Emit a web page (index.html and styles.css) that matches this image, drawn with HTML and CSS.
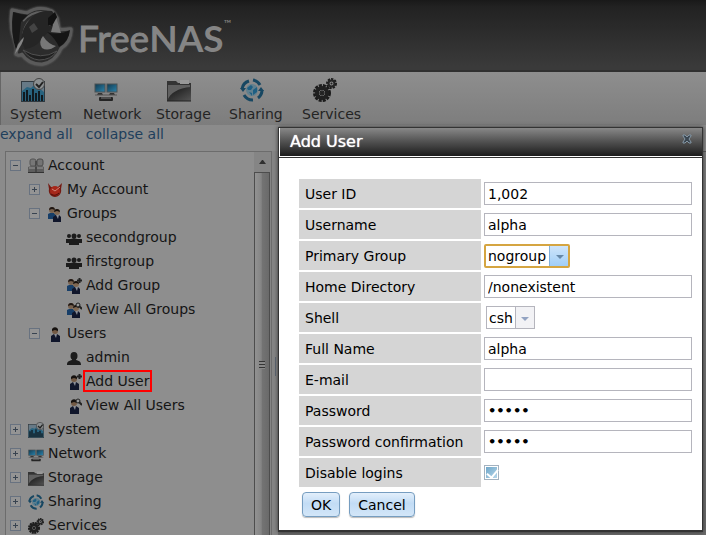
FILE: index.html
```
<!DOCTYPE html>
<html lang="en">
<head>
    <meta charset="utf-8">
    <title>FreeNAS</title>
    <link rel="stylesheet" href="styles.css">
</head>
<body>

    <!-- icons shared by the toolbar and the tree -->
    <svg class="sprite" aria-hidden="true">
        <defs>
            <linearGradient id="screen" x1="0" y1="0" x2="1" y2="1">
                <stop offset="0" stop-color="#123a50"/>
                <stop offset="1" stop-color="#2b83ab"/>
            </linearGradient>
            <linearGradient id="folder" x1="0" y1="0" x2="1" y2="1">
                <stop offset="0" stop-color="#111"/>
                <stop offset="1" stop-color="#555"/>
            </linearGradient>
        </defs>
        <symbol id="system" viewBox="0 0 24 24">
            <rect x="0.5" y="3.5" width="23" height="20" fill="#667986" stroke="#303940"/>
            <path d="M1 13l5-4 4 1 5-5 4 6 4 3v9H1z" fill="#28637f"/>
            <path d="M3 23v-9M6 23V12M9 23v-6M12 23V11M15 23v-8M18 23V13M21 23v-6" stroke="#111a20" stroke-width="2"/>
            <circle cx="18" cy="6" r="5.500" fill="#8b8f91" stroke="#444"/>
            <path d="M15 6l3 3 4-5" fill="none" stroke="#222" stroke-width="2"/>
        </symbol>
        <symbol id="network" viewBox="0 0 24 24">
            <rect x="1" y="6" width="10" height="8" fill="url(#screen)" stroke="#4b5254"/>
            <rect x="13" y="6" width="10" height="8" fill="url(#screen)" stroke="#4b5254"/>
            <path d="M4 15h4l1 2H3zM16 15h4l1 2h-6z" fill="#333"/>
            <path d="M1 17h22" stroke="#555"/>
            <rect x="5" y="19" width="14" height="4" rx="1" fill="#242424"/>
            <path d="M7 20h10" stroke="#777"/>
        </symbol>
        <symbol id="storage" viewBox="0 0 24 24">
            <path d="M0 3h9l2 2h13v18H0z" fill="#343434"/>
            <path d="M13 2h9v4h-9z" fill="#999"/>
            <path d="M1 7h22v15H1z" fill="#606060"/>
            <path d="M0 23C3 15 11 10 24 9v14z" fill="url(#folder)"/>
            <path d="M0 23h24" stroke="#222"/>
        </symbol>
        <symbol id="sharing" viewBox="0 0 24 24">
            <path d="M9 3A10 10 0 0 0 2 11M4 17a10 10 0 0 0 9 5M18 20a10 10 0 0 0 4-8M20 7a10 10 0 0 0-7-5" fill="none" stroke="#174762" stroke-width="3"/>
            <path d="M0 10h6l-3 4zM18 13h6l-3-4z" fill="#174762"/>
            <circle cx="12" cy="12" r="6" fill="#5f7f8e"/>
            <path d="M7 10l4-3 2 2-2 3H8zM13 12l4-3v5l-4 3zM9 14l3 1v3z" fill="#1e5f83"/>
        </symbol>
        <symbol id="services" viewBox="0 0 24 24">
            <circle cx="9" cy="15" r="7.500" fill="none" stroke="#1b1b1b" stroke-width="3" stroke-dasharray="3 1"/>
            <circle cx="9" cy="15" r="5" fill="none" stroke="#202020" stroke-width="4"/>
            <path d="M9 9v12M3 15h12M5 11l8 8M13 11l-8 8" stroke="#202020"/>
            <circle cx="9" cy="15" r="2" fill="#222"/>
            <circle cx="18.500" cy="5.500" r="4" fill="none" stroke="#1b1b1b" stroke-width="3" stroke-dasharray="2 1"/>
            <circle cx="18.500" cy="5.500" r="3" fill="none" stroke="#242424" stroke-width="2"/>
            <circle cx="18.500" cy="5.500" r="1" fill="#222"/>
        </symbol>
        <symbol id="account" viewBox="0 0 16 16">
            <rect x="2" y="1" width="6" height="7" rx="2" fill="#777" stroke="#555"/>
            <rect x="9" y="1" width="6" height="7" rx="2" fill="#747474" stroke="#4a4a4a"/>
            <path d="M0 15V9l3-1h4l1 1 2-1h4l2 1v6z" fill="#5d5d5d"/>
            <path d="M1 10h6M9 10h6" stroke="#999"/>
            <path d="M0 14.500h16M8 3v11" stroke="#333"/>
        </symbol>
        <symbol id="daemon" viewBox="0 0 16 16">
            <path d="M1 1l3 4h7l4-4-1 6c1 4-2 8-6 8s-7-4-6-8z" fill="#741a12"/>
            <circle cx="8" cy="9" r="5" fill="#a6281b"/>
            <path d="M5 7l3 2 5-4" fill="none" stroke="#d08478"/>
            <path d="M4 12q4 3 8-1" fill="none" stroke="#4d0d08"/>
        </symbol>
        <symbol id="user" viewBox="0 0 16 16">
            <circle cx="8" cy="5" r="3" fill="#735a45"/>
            <path d="M5 5c-1-5 7-5 6 0L8 4z" fill="#15110f"/>
            <path d="M4 16v-6l3-2h3l3 2v6z" fill="#10162b"/>
            <path d="M7 8h3l-1 4z" fill="#8b8f96"/>
        </symbol>
        <symbol id="users" viewBox="0 0 16 16">
            <circle cx="5" cy="4" r="3" fill="#77614e"/>
            <path d="M2 4c0-4 6-4 6 0L5 3z" fill="#1d1512"/>
            <path d="M1 13V8l2-1h4l2 2v4z" fill="#173e68"/>
            <circle cx="10" cy="6" r="3" fill="#806852"/>
            <path d="M7 6c0-4 6-4 6 0l-3-1z" fill="#16110f"/>
            <path d="M6 16v-5l3-2h3l2 2v5z" fill="#10162b"/>
            <path d="M9 9h3l-1 4z" fill="#8b8f96"/>
        </symbol>
        <symbol id="group" viewBox="0 0 16 16">
            <circle cx="3" cy="6" r="2" fill="#1c1c1c"/>
            <circle cx="13" cy="6" r="2" fill="#1c1c1c"/>
            <circle cx="8" cy="6" r="2.500" fill="#1c1c1c"/>
            <path d="M0 13V9h5l3-1 3 1h5v4h-3v2H3v-2z" fill="#1c1c1c"/>
        </symbol>
        <symbol id="person" viewBox="0 0 16 16">
            <ellipse cx="8" cy="6" rx="3.500" ry="4" fill="#1c1c1c"/>
            <path d="M1 15c0-4 2-4 5-5V7h4v3c3 1 5 1 5 5z" fill="#1c1c1c"/>
        </symbol>
        <symbol id="plus" viewBox="0 0 16 16">
            <path d="M13.500 0v5M11 2.500h5" stroke="#222" stroke-width="2"/>
        </symbol>
        <symbol id="lens" viewBox="0 0 16 16">
            <circle cx="12" cy="3" r="2" fill="#999" stroke="#222"/>
            <path d="M13 4l3 3" stroke="#222" stroke-width="2"/>
        </symbol>
    </svg>

    <header class="banner">
        <svg class="logo" viewBox="0 0 64 60" aria-hidden="true">
            <path d="M3 4q8 2 15 3Q30-1 43 5l5 7 2 12 12-1q0 13-10 19-6 14-19 16-14 0-20-10-3 2-6 0l2-8Q0 25 3 4z" fill="#2c2c2c" stroke="#5a5a5a" stroke-width="3" stroke-linejoin="round"/>
            <path d="M14 15Q26 2 42 8M14 28q3-14 13-17" fill="none" stroke="#606060" stroke-width="2"/>
            <path d="M4 6q9 3 15 3l-7 7-2 18-3 10Q1 26 4 6z" fill="#181818"/>
            <path d="M22 12q9-9 21-7l5 7-9 1 1 6 5 1q-8 8-13 14-6 8-16 9-9-14 6-31z" fill="#252525"/>
            <path d="M20 21l5-4 4 6-6 4z" fill="#444"/>
            <path d="M47 11l-7 9 4-1-2 7 10 1z" fill="#777"/>
            <path d="M39 12l7-6 2 5-5 9-4-1z" fill="#111"/>
            <path d="M34 30q-5 6-1 12 6 4 14-2-8-2-13-10z" fill="#777"/>
            <path d="M38 26q12 4 23-2-1 11-11 17-3-8-12-15z" fill="#151515"/>
            <path d="M15 31q-1 7-9 17Q8 37 15 31z" fill="#858585"/>
            <path d="M14 44q6 9 16 10 12 0 18-9-16 10-34-1z" fill="#202020" stroke="#505050"/>
        </svg>
        <span class="wordmark">Free<b>NAS</b></span><span class="tm">™</span>
    </header>

    <nav class="toolbar">
        <a href="#"><svg><use href="#system"/></svg>System</a>
        <a href="#"><svg><use href="#network"/></svg>Network</a>
        <a href="#"><svg><use href="#storage"/></svg>Storage</a>
        <a href="#"><svg><use href="#sharing"/></svg>Sharing</a>
        <a href="#"><svg><use href="#services"/></svg>Services</a>
    </nav>

    <div class="tree-links">
        <a href="#">expand all</a>
        <a href="#">collapse all</a>
    </div>

    <div class="main">
        <aside class="tree-pane">
            <ul class="tree">
                <li><button class="toggle open" aria-label="Collapse"></button><svg><use href="#account"/></svg><span>Account</span></li>
                <li class="level2"><button class="toggle" aria-label="Expand"></button><svg><use href="#daemon"/></svg><span>My Account</span></li>
                <li class="level2"><button class="toggle open" aria-label="Collapse"></button><svg><use href="#users"/></svg><span>Groups</span></li>
                <li class="level3"><svg><use href="#group"/></svg><span>secondgroup</span></li>
                <li class="level3"><svg><use href="#group"/></svg><span>firstgroup</span></li>
                <li class="level3"><svg><use href="#users"/><use href="#plus"/></svg><span>Add Group</span></li>
                <li class="level3"><svg><use href="#users"/><use href="#lens"/></svg><span>View All Groups</span></li>
                <li class="level2"><button class="toggle open" aria-label="Collapse"></button><svg><use href="#user"/></svg><span>Users</span></li>
                <li class="level3"><svg><use href="#person"/></svg><span>admin</span></li>
                <li class="level3"><svg><use href="#user"/><use href="#plus"/></svg><span class="marked">Add User</span></li>
                <li class="level3"><svg><use href="#user"/><use href="#lens"/></svg><span>View All Users</span></li>
                <li><button class="toggle" aria-label="Expand"></button><svg><use href="#system"/></svg><span>System</span></li>
                <li><button class="toggle" aria-label="Expand"></button><svg><use href="#network"/></svg><span>Network</span></li>
                <li><button class="toggle" aria-label="Expand"></button><svg><use href="#storage"/></svg><span>Storage</span></li>
                <li><button class="toggle" aria-label="Expand"></button><svg><use href="#sharing"/></svg><span>Sharing</span></li>
                <li><button class="toggle" aria-label="Expand"></button><svg><use href="#services"/></svg><span>Services</span></li>
            </ul>
            <div class="scrollbar">
                <div class="scroll-up"></div>
                <div class="scroll-thumb"><i class="grip"></i></div>
            </div>
        </aside>
        <div class="splitter"><i></i></div>
        <div class="content"></div>
    </div>

    <div class="dialog" role="dialog" aria-labelledby="dialogTitle">
        <div class="titlebar">
            <span id="dialogTitle">Add User</span>
            <button class="close" aria-label="Close">
                <svg viewBox="0 0 10 10"><path d="M1 1h2l2 2 2-2h2v1L7 5l2 3v1H7L5 7 3 9H1V8l2-3-2-3z" fill="#3b4650" stroke="#8497a6"/></svg>
            </button>
        </div>
        <form class="dialog-body">
            <table>
                <tr>
                    <th><label for="uid">User ID</label></th>
                    <td><input type="text" id="uid" value="1,002"></td>
                </tr>
                <tr>
                    <th><label for="username">Username</label></th>
                    <td><input type="text" id="username" value="alpha"></td>
                </tr>
                <tr>
                    <th><label for="group-select">Primary Group</label></th>
                    <td>
                        <div class="combo focused"><select id="group-select"><option>nogroup</option></select></div>
                    </td>
                </tr>
                <tr>
                    <th><label for="home">Home Directory</label></th>
                    <td><input type="text" id="home" value="/nonexistent"></td>
                </tr>
                <tr>
                    <th><label for="shell">Shell</label></th>
                    <td>
                        <div class="combo small"><select id="shell"><option>csh</option></select></div>
                    </td>
                </tr>
                <tr>
                    <th><label for="fullname">Full Name</label></th>
                    <td><input type="text" id="fullname" value="alpha"></td>
                </tr>
                <tr>
                    <th><label for="email">E-mail</label></th>
                    <td><input type="text" id="email"></td>
                </tr>
                <tr>
                    <th><label for="password1">Password</label></th>
                    <td><input type="password" id="password1" value="alpha"></td>
                </tr>
                <tr>
                    <th><label for="password2">Password confirmation</label></th>
                    <td><input type="password" id="password2" value="alpha"></td>
                </tr>
                <tr>
                    <th><label for="locked">Disable logins</label></th>
                    <td><input type="checkbox" id="locked" checked></td>
                </tr>
            </table>
            <div class="buttons">
                <button type="button">OK</button>
                <button type="button">Cancel</button>
            </div>
        </form>
    </div>

</body>
</html>
```
FILE: styles.css
```
* {
    box-sizing: border-box;
}

body {
    display: flex;
    flex-direction: column;
    height: 100vh;
    margin: 0;
    overflow: hidden;
    background-color: #8b8b8b;
    font-family: Verdana, "DejaVu Sans", sans-serif;
    font-size: 14px;
    line-height: 18px;
    color: #151515;
}

button, input, select {
    font: inherit;
    color: #000;
}

.sprite {
    position: absolute;
    width: 0;
    height: 0;
}

/* banner */
.banner {
    display: flex;
    flex: none;
    align-items: flex-start;
    height: 72px;
    padding: 6px 9px;
    background: linear-gradient(#191919, #222 10%, #3a3a3a 95%);
    border-bottom: 2px solid #303030;
    color: #858585;
}

.logo {
    width: 64px;
    height: 60px;
    margin-right: 5px;
    filter: drop-shadow(0 0 1px #777);
}

.wordmark {
    padding-top: 8px;
    font-family: Lato, sans-serif;
    font-size: 37px;
    line-height: 48px;
    -webkit-text-stroke: 1px #858585;
}

.wordmark b {
    -webkit-text-stroke: 0;
}

.tm {
    padding-top: 8px;
    font-family: Lato, sans-serif;
    font-size: 10px;
}

/* toolbar */
.toolbar {
    display: flex;
    flex: none;
    height: 53px;
    padding: 6px 10px 0;
    background: linear-gradient(#8e8e8e, #7d7d7d);
    border-left: 1px solid #666;
}

.toolbar a {
    display: flex;
    flex-direction: column;
    width: 73px;
    margin-left: -1px;
    margin-right: 1px;
    color: #242424;
    text-decoration: none;
}

.toolbar svg {
    width: 24px;
    height: 24px;
    margin: 0 0 3px 11px;
}

.tree-links {
    display: flex;
    flex: none;
    gap: 13px;
    height: 26px;
}

.tree-links a {
    color: #1f3f5c;
    text-decoration: none;
}

/* tree */
.main {
    display: flex;
    flex: 1;
    min-height: 0;
    padding-left: 5px;
}

.tree-pane {
    display: flex;
    width: 267px;
    overflow: hidden;
    background-color: #8e8e8e;
    border: 1px solid #6c6c6c;
    border-bottom: none;
}

.tree {
    flex: 1;
    margin: 0;
    padding: 1px 0 0 4px;
    list-style: none;
}

.tree li {
    display: flex;
    align-items: center;
    height: 24px;
    white-space: nowrap;
}

.tree .level2 {
    padding-left: 19px;
}

.tree .level3 {
    padding-left: 56px;
}

.tree svg {
    width: 16px;
    height: 16px;
    margin-top: 2px;
    margin-right: 4px;
}

.toggle {
    width: 11px;
    height: 11px;
    margin: 1px 7px 0 0;
    padding: 0;
    border: 1px solid #687280;
    background:
        linear-gradient(#384350, #384350) center / 5px 1px no-repeat,
        linear-gradient(#384350, #384350) center / 1px 5px no-repeat,
        #949494;
}

.toggle.open {
    background:
        linear-gradient(#384350, #384350) center / 5px 1px no-repeat,
        #949494;
}

.marked {
    margin-left: -3px;
    padding: 0 1px;
    border: 2px solid #f00;
}

.scrollbar {
    display: flex;
    flex-direction: column;
    width: 17px;
    background-color: #858585;
}

.scroll-up {
    height: 20px;
    padding: 8px 5px;
}

.scroll-up::before {
    content: "";
    display: block;
    border: 3px solid transparent;
    border-top: none;
    border-bottom: 4px solid #303030;
}

.scroll-thumb {
    display: flex;
    flex: 1;
    align-items: center;
    justify-content: center;
    margin-right: 1px;
    padding-top: 22px;
    border: 1px solid #4d4d4d;
    border-bottom: none;
    background: linear-gradient(90deg, #929292, #858585 45%, #747474 50%, #6a6a6a);
}

.grip {
    width: 6px;
    height: 8px;
    background: repeating-linear-gradient(#353535 0 1px, #888 1px 3px);
}

.splitter {
    display: flex;
    align-items: center;
    justify-content: center;
    width: 6px;
    padding-top: 46px;
    background-color: #858585;
}

.splitter i {
    width: 1px;
    height: 19px;
    background-color: #5d6673;
}

.content {
    flex: 1;
    background: linear-gradient(#808080, #6b6b6b);
    border-top: 1px solid #555;
}

/* add user dialog */
.dialog {
    position: absolute;
    top: 127px;
    left: 278px;
    right: 3px;
    background-color: #fff;
    border: 1px solid #333;
    border-bottom-width: 2px;
    box-shadow: 0 0 4px #333;
}

.titlebar {
    display: flex;
    align-items: center;
    justify-content: space-between;
    height: 29px;
    padding: 0 10px;
    border: 1px solid #fff;
    border-top: none;
    border-right: none;
    background: linear-gradient(#888, #555 45%, #1c1c1c);
    box-shadow: 0 1px #333;
    color: #fff;
    font-size: 16px;
    text-shadow: 0 0 1px #fff;
}

.close {
    width: 10px;
    height: 10px;
    margin-bottom: 6px;
    padding: 0;
    border: none;
    background: none;
}

.close svg {
    display: block;
    width: 10px;
    height: 10px;
}

.dialog-body {
    padding: 20px 7px 10px 18px;
}

table {
    width: 100%;
    border-spacing: 2px;
}

th, td {
    height: 29px;
    padding: 0 1px;
}

th {
    width: 182px;
    padding-left: 6px;
    background-color: #d5d5d5;
    font-weight: normal;
    text-align: left;
    white-space: nowrap;
    color: #000;
}

input[type="text"], input[type="password"] {
    display: block;
    width: 100%;
    height: 23px;
    padding: 0 3px;
    border: 1px solid #b5b5bd;
}

input[type="password"] {
    font-size: 13px;
    font-weight: bold;
}

.combo {
    position: relative;
    width: 86px;
    height: 24px;
}

.combo select {
    appearance: none;
    display: block;
    width: 100%;
    height: 100%;
    padding: 0 20px 0 3px;
    border: 1px solid #b5b5bd;
    background: linear-gradient(90deg, #b5b5bd 1px, #f2f2f5 1px) right / 19px 100% no-repeat #fff;
}

.combo::after {
    content: "";
    position: absolute;
    top: 11px;
    right: 6px;
    border: 4px solid transparent;
    border-top-color: #93a3c2;
    border-bottom: none;
    pointer-events: none;
}

.combo.focused select {
    padding: 0 20px 0 2px;
    border: 2px solid #d5a541;
    border-radius: 2px;
    background:
        linear-gradient(#7fb0dc, #7fb0dc) right 18px top / 1px 100% no-repeat,
        linear-gradient(#cfe5fa, #a0cef7) right / 18px 100% no-repeat #fff;
}

.combo.focused::after {
    border-top-color: #6688a8;
}

.combo.small {
    width: 49px;
    height: 23px;
    margin-left: 2px;
}

.combo.small select {
    padding-left: 2px;
}

input[type="checkbox"] {
    appearance: none;
    display: block;
    position: relative;
    width: 15px;
    height: 15px;
    margin: 0;
    border: 1px solid #a3b2c0;
    background: linear-gradient(135deg, #6fa6c8, #b5d6ea) content-box #fff;
    padding: 1px;
}

input[type="checkbox"]:checked::after {
    content: "";
    position: absolute;
    top: 1px;
    left: 4px;
    width: 5px;
    height: 9px;
    border: solid #fff;
    border-width: 0 2px 2px 0;
    transform: rotate(40deg);
}

.buttons {
    display: flex;
    gap: 9px;
    padding: 3px 5px;
}

.buttons button {
    height: 25px;
    padding: 0 8px;
    border: 1px solid #769dc0;
    border-radius: 4px;
    background: linear-gradient(#e3effb, #c2dcf5 45%, #d3e6f8);
    box-shadow: 0 1px 1px #bbb;
}
```
